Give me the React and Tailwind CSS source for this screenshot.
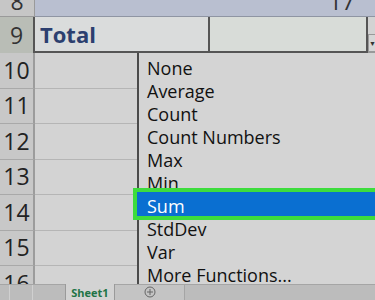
import React from "react";

const rows = [10, 11, 12, 13, 14, 15, 16];
const items = ["None", "Average", "Count", "Count Numbers", "Max", "Min", "Sum", "StdDev", "Var", "More Functions..."];

export default function App() {
  return (
    <div className="relative w-[375px] h-[300px] overflow-hidden bg-[#d3d3d3]" style={{ fontFamily: '"Open Sans", "Noto Sans", sans-serif' }}>
      {/* Row 8 */}
      <div className="flex h-[17px]">
        <div className="w-[35px] shrink-0 bg-[#c6c6c6] border-r border-b border-[#9a9a9a] overflow-hidden flex justify-center">
          <span className="text-[23px] leading-none text-[#333] -mt-[10px]">8</span>
        </div>
        <div className="flex-1 bg-[#b9bfd0] border-b border-[#8f95a3] overflow-hidden flex justify-end pr-[20px]">
          <span className="text-[23px] leading-none text-[#333] -mt-[10px]">17</span>
        </div>
      </div>
      {/* Row 9 */}
      <div className="flex h-[36px]">
        <div className="w-[35px] shrink-0 bg-[#b9bdb6] border-r-2 border-[#555] flex items-center justify-center">
          <span className="text-[23px] leading-none text-[#333]">9</span>
        </div>
        <div className="w-[173px] shrink-0 bg-[#dadcdc] border-b-2 border-[#555] flex items-center pl-[5px]">
          <span className="text-[22px] font-bold leading-none text-[#2c3f6f]">Total</span>
        </div>
        <div className="w-[160px] shrink-0 bg-[#d8dcd8] border-2 border-t-0 border-[#555]"></div>
        <div className="flex-1 border-b border-[#999] flex flex-col justify-end">
          <div className="h-[18px] bg-[#d6d6d6] border border-[#999] flex items-center justify-center">
            <span className="text-[7px] text-[#333] leading-none">▼</span>
          </div>
        </div>
      </div>
      {/* Rows 10-16 */}
      {rows.map((n) => (
        <div key={n} className="flex h-[35.5px]">
          <div className="w-[35px] shrink-0 bg-[#c8c8c8] border-r-2 border-b border-r-[#9c9c9c] border-b-[#a9a9a9] flex items-center justify-center">
            <span className="text-[23px] leading-none text-[#222]">{n}</span>
          </div>
          <div className="w-[173px] shrink-0 bg-[#d3d3d3] border-b border-[#b5b5b5]"></div>
          <div className="flex-1 bg-[#d3d3d3] border-b border-[#b5b5b5]"></div>
        </div>
      ))}

      {/* Dropdown menu */}
      <div className="absolute left-[137px] top-[53px] w-[240px] h-[233px] bg-[#d4d4d4] border-l-2 border-b-2 border-[#4a4a4a] pt-[3px]">
        {items.map((t) =>
          t === "Sum" ? (
            <div key={t} className="relative h-[23px] flex items-center pl-[8px] text-[18px] leading-none text-white">
              <div className="absolute -left-[6px] -right-[4px] -top-[6px] -bottom-[3px] border-[4px] border-[#3ddc3d] bg-[#0a6fd1]"></div>
              <span className="relative">{t}</span>
            </div>
          ) : (
            <div key={t} className="h-[23px] flex items-center pl-[8px] text-[18px] leading-none text-[#111]">
              {t}
            </div>
          )
        )}
      </div>

      {/* Sheet tab bar */}
      <div className="absolute left-0 bottom-0 w-full h-[16px] flex bg-[#bcbcbc] border-t border-[#a5a5a5]">
        <div className="w-[65px] flex">
          <div className="w-[10px] border-r border-[#d0d0d0]"></div>
          <div className="w-[23px] border-r border-[#d0d0d0]"></div>
        </div>
        <div className="w-[50px] -mt-px bg-[#d3d3d3] border-l border-r border-[#9a9a9a] flex items-start justify-center">
          <span className="text-[11px] font-bold text-[#217346] leading-none mt-[3px]">Sheet1</span>
        </div>
        <div className="w-[70px] bg-[#c4c4c4] border-r border-[#a5a5a5] flex items-start justify-center pt-[1px]">
          <svg width="12" height="12" viewBox="0 0 12 12">
            <circle cx="6" cy="6" r="5" fill="none" stroke="#666" strokeWidth="1" />
            <path d="M6 3v6M3 6h6" stroke="#666" strokeWidth="1" />
          </svg>
        </div>
      </div>
    </div>
  );
}
